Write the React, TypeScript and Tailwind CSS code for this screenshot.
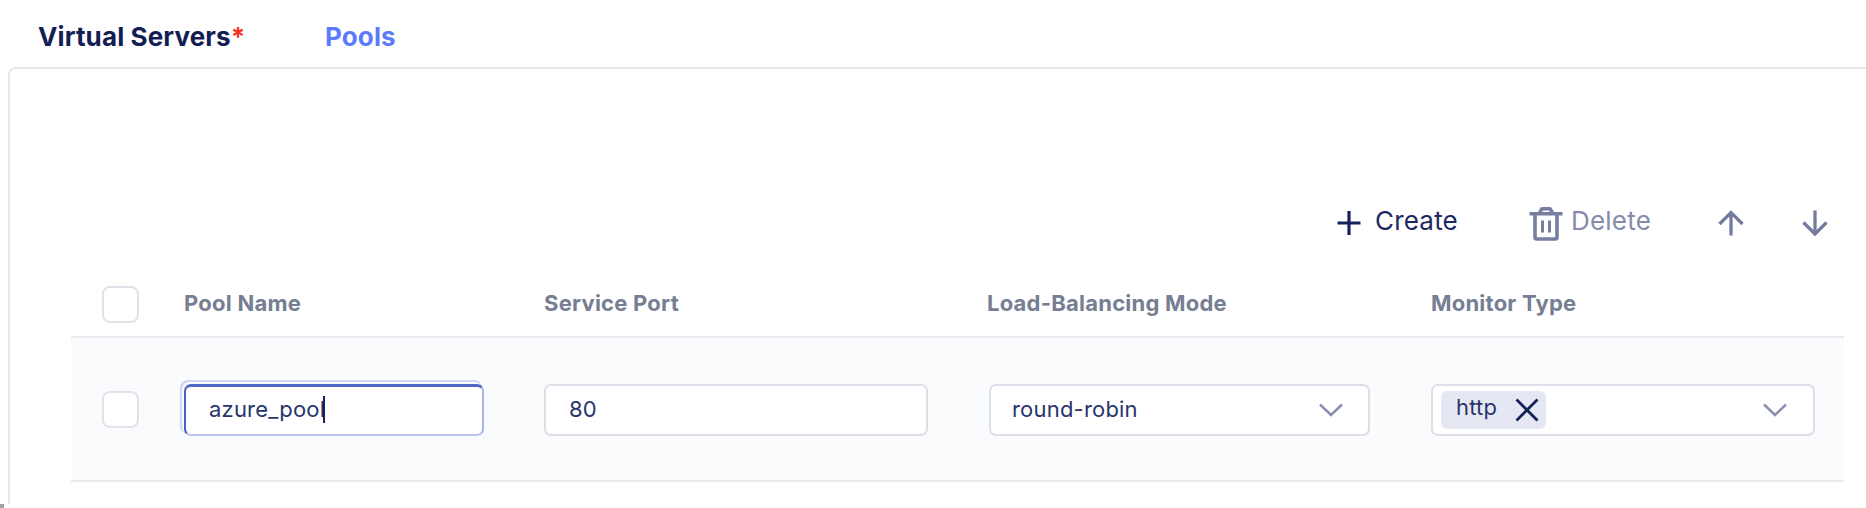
import type { ReactNode } from "react";

function Checkbox() {
  return <div className="h-[37px] w-[37px] shrink-0 rounded-[8px] border-2 border-[#e1e2ea] bg-white" />;
}

function Chevron() {
  return (
    <svg className="h-[14px] w-[26px] shrink-0" viewBox="0 0 26 14" fill="none" stroke="#8b90b3" strokeWidth="2.5">
      <path d="M2 1.5 13 12 24 1.5" />
    </svg>
  );
}

function Field({ className, children }: { className: string; children: ReactNode }) {
  return (
    <div className={`flex h-[52px] items-center rounded-[7px] border-2 border-[#dddfe8] bg-white pb-px text-[22px] tracking-[0.2px] text-[#28346b] ${className}`}>
      {children}
    </div>
  );
}

function Toolbar() {
  return (
    <div className="mt-[125px] flex h-[52px] items-center text-[26px] leading-[52px] tracking-[0.2px]">
      <button className="ml-[1266px] flex items-center text-[#1c2961]">
        <svg className="mt-[6px] h-[24px] w-[24px]" viewBox="0 0 24 24" fill="none" stroke="#14215a" strokeWidth="3.2">
          <path d="M12 0v24M.5 12h23" />
        </svg>
        <span className="ml-[14px] w-[84px] pt-px text-left">Create</span>
      </button>
      <button className="ml-[70px] flex items-center text-[#858bab]">
        <svg className="mt-[6px] h-[36px] w-[34px]" viewBox="0 0 34 36" fill="none" stroke="#777e9f" strokeWidth="3.6" strokeLinejoin="round">
          <path d="M.5 8.7h33" />
          <path d="M10.5 8 13 3.7h8L23.5 8" />
          <path d="M6 9v23.3q0 1.700 1.700 1.700h18.600q1.700 0 1.700-1.700V9" />
          <path d="M13.500 15.500v12M20.500 15.500v12" strokeWidth="3" />
        </svg>
        <span className="ml-[8px] w-[80px] pt-px text-left">Delete</span>
      </button>
      <svg className="ml-[67px] mt-[6px] h-[26px] w-[26px]" viewBox="0 0 26 26" fill="none" stroke="#747b9f" strokeWidth="3.3">
        <path d="M13 25.500V2.500M1.500 14 13 2.500 24.500 14" />
      </svg>
      <svg className="ml-[58px] mt-[6px] h-[26px] w-[26px]" viewBox="0 0 26 26" fill="none" stroke="#747b9f" strokeWidth="3.3">
        <path d="M13 .5v23.500M1.500 12.500 13 24 24.500 12.500" />
      </svg>
    </div>
  );
}

export default function App() {
  return (
    <div className="flex h-[508px] w-[1866px] flex-col overflow-hidden bg-white font-['Inter',sans-serif]">
      <nav className="flex h-[67px] shrink-0 pt-[17px] text-[26px] leading-[40px] font-bold tracking-[0.13px] whitespace-nowrap">
        <div className="w-[287px] pl-[38px] text-[#131d54]">
          <span>Virtual Servers</span>
          <span className="text-[#ee3524]">*</span>
        </div>
        <div className="pl-[38px] text-[#5b7bfb]">Pools</div>
      </nav>
      <main className="ml-[8px] h-[437px] shrink-0 rounded-tl-[8px] border-t-2 border-l-2 border-[#e6e6ec] pl-[61px]">
        <Toolbar />
        <div className="mt-[21px] flex h-[71px] w-[1773px] items-start border-b-2 border-[#e9eaf0] text-[22px] leading-[34px] font-bold tracking-[0.23px] whitespace-nowrap text-[#757e92]">
          <div className="w-[113px] pt-[19px] pl-[31px]"><Checkbox /></div>
          <div className="w-[360px] pt-[19px]">Pool Name</div>
          <div className="w-[443px] pt-[19px]">Service Port</div>
          <div className="w-[444px] pt-[19px]">Load-Balancing Mode</div>
          <div className="pt-[19px]">Monitor Type</div>
        </div>
        <div className="flex h-[144px] w-[1773px] items-start border-b-2 border-[#e9eaf0] bg-[#fafbfd] pt-[46px]">
          <div className="w-[113px] pt-[7px] pl-[31px]"><Checkbox /></div>
          <div className="flex h-[52px] w-[300px] items-center rounded-[7px] border-t-[3px] border-r-2 border-b-2 border-l-2 border-t-[#5067ca] border-r-[#a9b4e7] border-b-[#bcc5ed] border-l-[#4a61c8] bg-white pb-[2px] pl-[23px] text-[22px] tracking-[0.2px] text-[#28346b] shadow-[-2px_-2px_0_0px_#fafbfd,-3px_-3px_0_1px_#cfd7f4]">
            <span>azure_pool</span>
            <span className="-ml-[2px] h-[27px] w-[2px] bg-[#14215a]" />
          </div>
          <Field className="ml-[60px] w-[384px] pl-[23px]">80</Field>
          <Field className="ml-[61px] w-[381px] justify-between pr-[24px] pl-[21px]">
            <span>round-robin</span>
            <Chevron />
          </Field>
          <Field className="ml-[61px] w-[384px] justify-between pr-[25px] pl-[8px]">
            <span className="flex h-[38px] w-[105px] items-center rounded-[6px] bg-[#e5e8f2] pl-[15px]">
              <span className="w-[59px] pb-[4px]">http</span>
              <svg className="h-[24px] w-[24px]" viewBox="0 0 24 24" fill="none" stroke="#14215a" strokeWidth="2.8">
                <path d="M1.5 1.5 22.5 22.5M22.5 1.5 1.5 22.5" />
              </svg>
            </span>
            <Chevron />
          </Field>
        </div>
      </main>
      <div className="h-[4px] w-[4px] shrink-0 bg-[#a3a3a3]" />
    </div>
  );
}
